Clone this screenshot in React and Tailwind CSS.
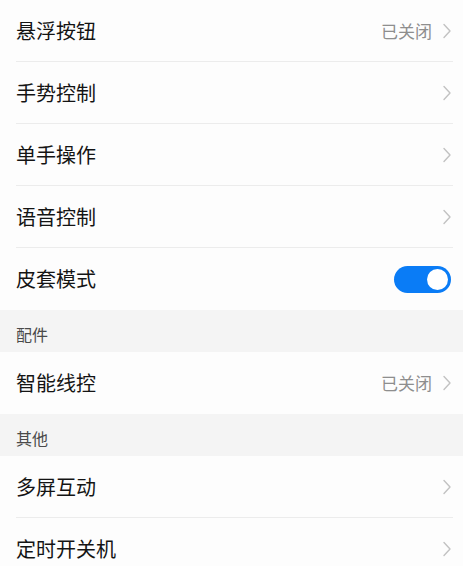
const Chevron = () => (
  <svg width="8" height="16" viewBox="0 0 8 16" fill="none" className="shrink-0">
    <polyline
      points="1,1.5 7,8 1,14.5"
      stroke="#c2c2c2"
      strokeWidth="1.4"
      strokeLinecap="round"
      strokeLinejoin="round"
    />
  </svg>
);

const Toggle = () => (
  <div className="flex items-center justify-end w-[57px] h-[27px] rounded-full bg-[#0a7cf6] pr-[3px]">
    <div className="size-[21px] rounded-full bg-white" />
  </div>
);

const Row = ({ label, value, toggle, divider }) => (
  <div className="flex h-[62px] pl-4 pr-[10px]">
    <div
      className={`flex flex-1 items-center justify-between pr-[2px] ${
        divider ? "border-b border-[#ececec]" : ""
      }`}
    >
      <span className="text-[20px] text-[#141414]">{label}</span>
      {toggle ? (
        <Toggle />
      ) : (
        <div className="flex items-center gap-[11px]">
          {value && <span className="text-[17px] text-[#8e8e8e]">{value}</span>}
          <Chevron />
        </div>
      )}
    </div>
  </div>
);

const Header = ({ title }) => (
  <div className="flex items-center h-[42px] pl-4 bg-[#f4f4f4] pt-[6px]">
    <span className="text-[16px] text-[#4a4a4a]">{title}</span>
  </div>
);

export default function App() {
  return (
    <div
      className="w-[463px] h-[566px] overflow-hidden bg-[#fdfdfd]"
      style={{ fontFamily: '"Noto Sans CJK SC", "Noto Sans", sans-serif' }}
    >
      <Row label="悬浮按钮" value="已关闭" divider />
      <Row label="手势控制" divider />
      <Row label="单手操作" divider />
      <Row label="语音控制" divider />
      <Row label="皮套模式" toggle />
      <Header title="配件" />
      <Row label="智能线控" value="已关闭" />
      <Header title="其他" />
      <Row label="多屏互动" divider />
      <Row label="定时开关机" />
    </div>
  );
}
